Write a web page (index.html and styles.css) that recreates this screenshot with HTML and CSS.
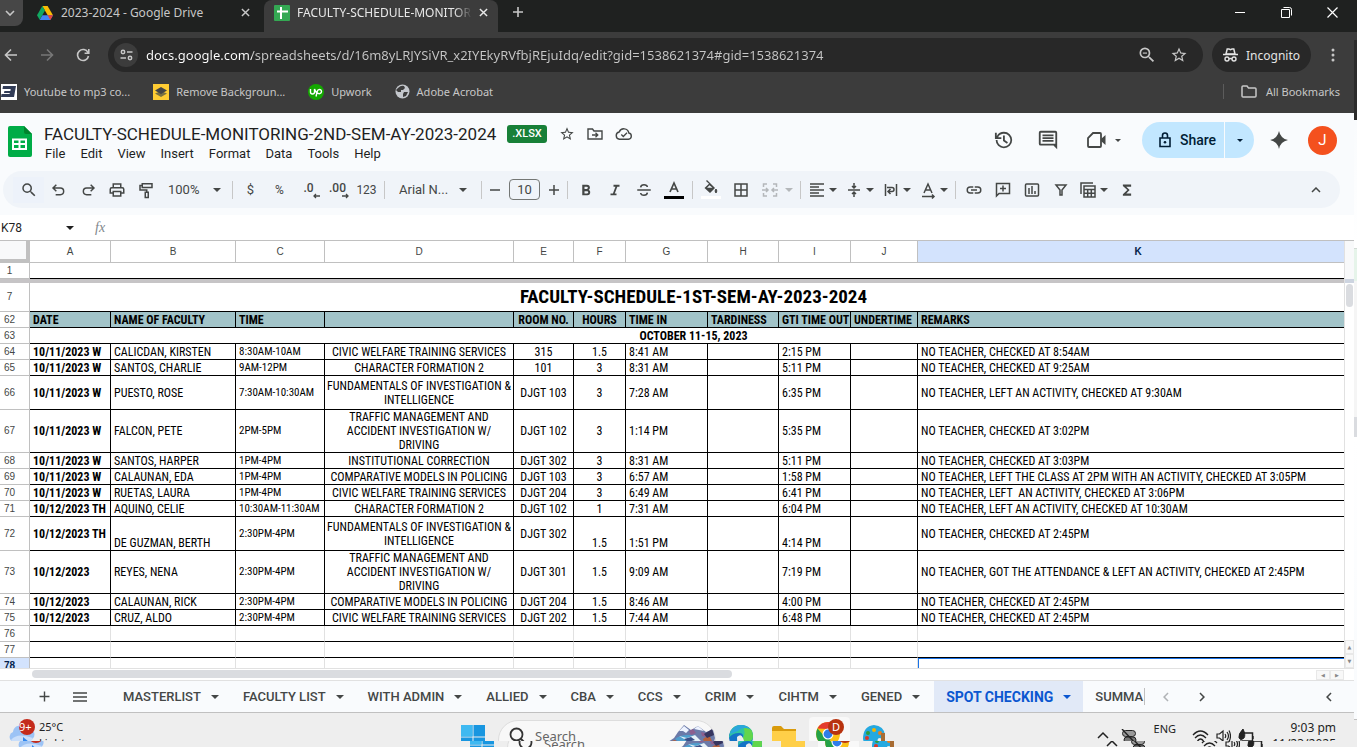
FILE: index.html
```html
<!DOCTYPE html>
<html lang="en">

<head>
    <meta charset="utf-8">
    <title>FACULTY-SCHEDULE-MONITORING-2ND-SEM-AY-2023-2024</title>
    <link rel="stylesheet" href="styles.css">
</head>

<body>
    <svg class="defs" aria-hidden="true">
        <symbol id="caret" viewBox="0 0 8 4"><path d="M0 0h8L4 4z" /></symbol>
        <symbol id="close" viewBox="0 0 10 10"><path d="M1 1l8 8M9 1l-8 8" fill="none" stroke="currentColor" stroke-width="1.6" /></symbol>
        <symbol id="star" viewBox="0 0 24 24"><path d="M22 9.24l-7.19-.62L12 2 9.19 8.63 2 9.24l5.46 4.73L5.82 21 12 17.27 18.18 21l-1.63-7.03L22 9.24zM12 15.4l-3.76 2.27 1-4.28-3.32-2.88 4.38-.38L12 6.1l1.71 4.04 4.38.38-3.32 2.88 1 4.28L12 15.4z" /></symbol>
        <symbol id="left" viewBox="0 0 24 24"><path d="M15.4 7.4L14 6l-6 6 6 6 1.4-1.4L10.8 12z" /></symbol>
        <symbol id="right" viewBox="0 0 24 24"><path d="M10 6L8.6 7.4l4.6 4.6-4.6 4.6L10 18l6-6z" /></symbol>
        <symbol id="search" viewBox="0 0 24 24"><path d="M15.5 14h-.79l-.28-.27A6.47 6.47 0 0 0 16 9.5 6.5 6.5 0 1 0 9.5 16c1.61 0 3.09-.59 4.23-1.57l.27.28v.79l5 4.99L20.49 19l-4.99-5zm-6 0C7.01 14 5 11.99 5 9.5S7.01 5 9.5 5 14 7.01 14 9.5 11.99 14 9.5 14z" /></symbol>
        <symbol id="plus" viewBox="0 0 24 24"><path d="M19 13h-6v6h-2v-6H5v-2h6V5h2v6h6z" /></symbol>
    </svg>

    <div class="tabstrip">
        <button class="tab-search" aria-label="Search tabs"><svg width="10" height="6" viewBox="0 0 10 6"><path d="M1 1l4 4 4-4" fill="none" stroke="currentColor" stroke-width="1.6" /></svg></button>
        <div class="tab">
            <svg width="16" height="14" viewBox="0 0 16 14">
                <path d="M5.3 0h5.3L16 9.3h-5.3z" fill="#fbbc04" />
                <path d="M5.3 0L8 4.6 2.7 13.8 0 9.3z" fill="#11a861" />
                <path d="M5.4 9.3H16l-2.7 4.6H2.7z" fill="#4285f4" />
                <path d="M10.7 9.3H16l-2.7 4.6z" fill="#ea4335" />
            </svg>
            <span>2023-2024 - Google Drive</span>
            <button aria-label="Close tab"><svg width="9" height="9"><use href="#close" /></svg></button>
        </div>
        <div class="tab active">
            <svg width="16" height="16" viewBox="0 0 16 16"><rect width="16" height="16" rx="1" fill="#34a853" /><path d="M3 6.5h11M7 2v12" stroke="#fff" stroke-width="2" /></svg>
            <span>FACULTY-SCHEDULE-MONITOR</span>
            <button aria-label="Close tab"><svg width="9" height="9"><use href="#close" /></svg></button>
        </div>
        <button class="new-tab" aria-label="New tab"><svg width="12" height="12" viewBox="0 0 12 12"><path d="M6 1v10M1 6h10" stroke="currentColor" stroke-width="1.6" /></svg></button>
        <div class="window-buttons">
            <button aria-label="Minimize"><svg width="10" height="10"><path d="M0 5.5h10" stroke="#fff" /></svg></button>
            <button aria-label="Restore"><svg width="11" height="11" viewBox="0 0 11 11"><path d="M.5 2.5h8v8h-8zM2.500 .5h6q2 0 2 2v6" fill="none" stroke="#fff" /></svg></button>
            <button aria-label="Close"><svg width="11" height="11" viewBox="0 0 11 11"><path d="M.5.5l10 10M10.500 .5l-10 10" stroke="#fff" stroke-width="1.2" /></svg></button>
        </div>
    </div>

    <div class="navbar">
        <button aria-label="Back"><svg width="14" height="14" viewBox="0 0 14 14"><path d="M13 7H2M7 1.500L1.500 7 7 12.500" fill="none" stroke="currentColor" stroke-width="1.6" /></svg></button>
        <button class="off" aria-label="Forward"><svg width="14" height="14" viewBox="0 0 14 14"><path d="M1 7h11M7 1.500L12.500 7 7 12.500" fill="none" stroke="currentColor" stroke-width="1.6" /></svg></button>
        <button aria-label="Reload"><svg width="14" height="14" viewBox="0 0 14 14"><path d="M12 4.500A5.500 5.500 0 1 0 12.500 8M12.800 1v4.200H8.600" fill="none" stroke="currentColor" stroke-width="1.6" /></svg></button>
        <div class="omnibox">
            <span class="site-info"><svg width="13" height="12" viewBox="0 0 13 12"><g fill="none" stroke="currentColor" stroke-width="1.5"><circle cx="3" cy="3" r="1.700" /><circle cx="10" cy="9" r="1.700" /><path d="M7 3h5.500M.5 9H6" /></g></svg></span>
            <input type="text" aria-label="Address" value="docs.google.com/spreadsheets/d/16m8yLRJYSiVR_x2IYEkyRVfbjREjuIdq/edit?gid=1538621374#gid=1538621374">
            <svg width="20" height="20" viewBox="0 0 24 24"><use href="#search" /><path d="M7 9h5v1.400H7z" /></svg>
            <svg width="18" height="18"><use href="#star" /></svg>
        </div>
        <button class="incognito">
            <svg width="15" height="14" viewBox="0 0 15 14"><path d="M3 6L4.200 1h1.800l1.500.6L9 1h1.800L12 6z" fill="none" stroke="currentColor" stroke-width="1.500" /><path d="M0 6.500h15" stroke="currentColor" stroke-width="1.500" /><g fill="none" stroke="currentColor" stroke-width="1.400"><circle cx="4" cy="11" r="2" /><circle cx="11" cy="11" r="2" /><path d="M6 11q1.500-1 3 0" /></g></svg>
            Incognito
        </button>
        <button class="more" aria-label="Menu"><svg width="4" height="14" viewBox="0 0 4 14"><circle cx="2" cy="2" r="1.500" /><circle cx="2" cy="7" r="1.500" /><circle cx="2" cy="12" r="1.500" /></svg></button>
    </div>

    <div class="bookmarks">
        <a href="#"><svg width="16" height="16" viewBox="0 0 16 16"><path d="M0 0h16v16H0z" fill="#fff" /><path d="M2 2h13l-2 11H0l.5-3h8l.3-1H3l.4-2h6l.3-2H1.500z" fill="#323c56" /></svg>Youtube to mp3 co...</a>
        <a href="#"><svg width="16" height="16" viewBox="0 0 16 16"><path d="M0 0h16v16H0z" fill="#fc3" /><path d="M8 7l6 2.500L8 13 2 9.500z" fill="#7a7042" /><path d="M8 3l6 3.500L8 10 2 6.500z" fill="#454545" /></svg>Remove Backgroun...</a>
        <a href="#"><svg width="16" height="16" viewBox="0 0 16 16"><circle cx="8" cy="8" r="8" fill="#14a800" /><path d="M2.500 5v3q0 2 2 2t2-2V5q1 3 3 4.500M8 12.500l1.200-5q.5-2 2.200-2a2 2 0 1 1 0 4.200q-1.500 0-2.800-1.500" fill="none" stroke="#fff" stroke-width="1.400" /></svg>Upwork</a>
        <a href="#"><svg width="15" height="15" viewBox="0 0 15 15"><circle cx="7.500" cy="7.500" r="7" fill="#c4c7cc" /><path d="M3 4q3-3 6-2l1 2-2 2H6v2H3L1 6zm6 4l4 0-2 4-3 1V10z" fill="#3c3c3c" /></svg>Adobe Acrobat</a>
        <a href="#" class="all"><svg width="16" height="13" viewBox="0 0 16 13"><path d="M1 11V2q0-1 1-1h4l1.500 2H14q1 0 1 1v7q0 1-1 1H2q-1 0-1-1z" fill="none" stroke="currentColor" stroke-width="1.500" /></svg>All Bookmarks</a>
    </div>

    <header class="docs-header">
        <svg class="logo" width="24" height="32" viewBox="0 0 24 32"><path d="M2 0h14l8 8v21q0 2-2 2H2q-2 0-2-2V2q0-2 2-2z" fill="#00ac47" /><path d="M16 0l8 8h-6q-2 0-2-2z" fill="#00832d" /><path d="M4 12.500h15v11.500H4zM6 14.500V17h4.500v-2.500zm6.500 0V17H17v-2.500zM6 19v3h4.500v-3zm6.500 0v3H17v-3z" fill="#fff" fill-rule="evenodd" /></svg>
        <div class="doc">
            <div class="doc-title">
                <h1>FACULTY-SCHEDULE-MONITORING-2ND-SEM-AY-2023-2024</h1>
                <span class="badge">.XLSX</span>
                <svg width="16" height="16"><use href="#star" /></svg>
                <svg width="16" height="16" viewBox="0 0 16 16"><path d="M1 13V3h4.500l1.500 2h8v8z" fill="none" stroke="currentColor" stroke-width="1.400" /><path d="M5 9h5.500M8.500 6.800L10.800 9l-2.300 2.200" fill="none" stroke="currentColor" stroke-width="1.300" /></svg>
                <svg width="18" height="16" viewBox="0 0 18 16"><path d="M4.500 13.300a3.700 3.700 0 0 1-.3-7.300 5 5 0 0 1 9.600 1 3.200 3.200 0 0 1-.3 6.300z" fill="none" stroke="currentColor" stroke-width="1.400" /><path d="M6.300 8.500l2 2L12 6.800" fill="none" stroke="currentColor" stroke-width="1.300" /></svg>
            </div>
            <nav class="menu">
                <a href="#">File</a><a href="#">Edit</a><a href="#">View</a><a href="#">Insert</a><a href="#">Format</a><a href="#">Data</a><a href="#">Tools</a><a href="#">Help</a>
            </nav>
        </div>
        <div class="doc-actions">
            <svg width="22" height="22" viewBox="0 0 24 24"><path d="M13 3a9 9 0 0 0-7.800 4.500V4h-2v7h7V9H6.700A7 7 0 1 1 6 12H4a9 9 0 1 0 9-9zm-1 4v6l4.300 3 1.100-1.600L14 12V7z" /></svg>
            <svg width="22" height="22" viewBox="0 0 24 24"><path d="M22 4a2 2 0 0 0-2-2H4a2 2 0 0 0-2 2v12q0 2 2 2h14l4 4zM20 16H4V4h16zM6 12h12v2H6zm0-3h12v2H6zm0-3h12v2H6z" /></svg>
            <span class="meet"><svg width="20" height="16" viewBox="0 0 20 16"><path d="M6 1h7q1 0 1 1v12q0 1-1 1H2q-1 0-1-1V6z" fill="none" stroke="currentColor" stroke-width="1.800" /><path d="M14 7l4.500-4v10L14 9z" /></svg><svg width="6" height="3"><use href="#caret" /></svg></span>
            <div class="share">
                <button><svg width="14" height="16" viewBox="0 0 14 16"><path d="M2 6h10v8.500H2zM4.500 6V3.500a2.500 2.500 0 0 1 5 0V6" fill="none" stroke="currentColor" stroke-width="1.600" /><circle cx="7" cy="10.200" r="1.300" /></svg>Share</button>
                <button aria-label="Share options"><svg width="6" height="3"><use href="#caret" /></svg></button>
            </div>
            <svg width="18" height="18" viewBox="0 0 18 18"><path d="M9 0q1.500 7.500 9 9-7.500 1.500-9 9-1.500-7.500-9-9 7.500-1.500 9-9z" /></svg>
            <span class="avatar">J</span>
        </div>
    </header>

    <div class="toolbar">
        <button class="find" aria-label="Search menus"><svg width="18" height="18"><use href="#search" /></svg></button>
        <button aria-label="Undo"><svg width="16" height="16" viewBox="0 0 24 24"><path d="M8 4L3 9l5 5M4 9h10q5 0 5 5t-5 5H7" fill="none" stroke="currentColor" stroke-width="2.200" /></svg></button>
        <button aria-label="Redo"><svg width="16" height="16" viewBox="0 0 24 24"><path d="M16 4l5 5-5 5M20 9H10q-5 0-5 5t5 5h7" fill="none" stroke="currentColor" stroke-width="2.200" /></svg></button>
        <button aria-label="Print"><svg width="18" height="18" viewBox="0 0 24 24"><path d="M19 8h-1V3H6v5H5a3 3 0 0 0-3 3v6h4v4h12v-4h4v-6a3 3 0 0 0-3-3zM8 5h8v3H8zm8 14H8v-4h8zm4-4h-2v-2H6v2H4v-4q0-1 1-1h14q1 0 1 1z" /></svg></button>
        <button aria-label="Paint format"><svg width="18" height="18" viewBox="0 0 24 24"><path d="M7 3.500h13v5H7zM7 6H4v6h9v3M11 15h4v7h-4z" fill="none" stroke="currentColor" stroke-width="2" /></svg></button>
        <label class="pick zoom"><select aria-label="Zoom"><option>100%</option></select><svg width="8" height="4"><use href="#caret" /></svg></label>
        <i></i>
        <button>$</button>
        <button class="small">%</button>
        <button class="stack" aria-label="Decrease decimal places"><b>.0</b><svg width="20" height="20" viewBox="0 0 20 20"><path d="M19 16h-6M15 14l-2 2 2 2" fill="none" stroke="currentColor" stroke-width="1.300" /></svg></button>
        <button class="stack" aria-label="Increase decimal places"><b>.00</b><svg width="20" height="20" viewBox="0 0 20 20"><path d="M12 16h6M16 14l2 2-2 2" fill="none" stroke="currentColor" stroke-width="1.300" /></svg></button>
        <button class="small">123</button>
        <i></i>
        <label class="pick font"><select aria-label="Font"><option>Arial N...</option></select><svg width="8" height="4"><use href="#caret" /></svg></label>
        <i></i>
        <button class="step" aria-label="Decrease font size"><svg width="12" height="12"><path d="M1 6h10" stroke="currentColor" stroke-width="1.500" /></svg></button>
        <input type="text" class="size" aria-label="Font size" value="10">
        <button class="step" aria-label="Increase font size"><svg width="12" height="12"><path d="M1 6h10M6 1v10" stroke="currentColor" stroke-width="1.500" /></svg></button>
        <i></i>
        <button aria-label="Bold"><svg width="18" height="18" viewBox="0 0 24 24"><path d="M15.600 11.800c1-.7 1.600-1.800 1.600-2.800a4 4 0 0 0-4-4H7v14h7a3.800 3.800 0 0 0 1.600-7.200zM10 7.500h3a1.500 1.500 0 0 1 0 3h-3zm3.500 9H10v-3h3.500a1.500 1.500 0 0 1 0 3z" /></svg></button>
        <button aria-label="Italic"><svg width="18" height="18" viewBox="0 0 24 24"><path d="M10 5v2.500h2.600l-3.400 9H6V19h8v-2.500h-2.300l3.400-9H18V5z" /></svg></button>
        <button aria-label="Strikethrough"><svg width="18" height="18" viewBox="0 0 24 24"><path d="M3 12h18M16.500 8q-.5-3-4.500-3T7.500 8.500M7.500 16q.5 3 4.500 3t4.500-3.500" fill="none" stroke="currentColor" stroke-width="2" /></svg></button>
        <button class="wide" aria-label="Text color"><svg width="20" height="20" viewBox="0 0 20 20"><path d="M6 12l4-9 4 9M7.500 9h5" fill="none" stroke="currentColor" stroke-width="1.700" /><path d="M0 16h20v3H0z" fill="#000" /></svg></button>
        <i></i>
        <button aria-label="Fill color"><svg width="20" height="20" viewBox="0 0 20 20"><path d="M5 1l1-1 8 8-5 5-5.500-5L8 3.800zM8.500 5.200L6 7.800h5.500z" fill-rule="evenodd" /><path d="M15 9q1.800 2 0 4-2-2 0-4z" stroke="currentColor" /><path d="M0 16h20v3H0z" fill="#fff" /></svg></button>
        <button class="wide" aria-label="Borders"><svg width="18" height="18" viewBox="0 0 18 18"><path d="M3 3h12v12H3zM9 3v12M3 9h12" fill="none" stroke="currentColor" stroke-width="1.500" /></svg></button>
        <button class="menu-btn merge" aria-label="Merge cells"><svg width="18" height="18" viewBox="0 0 18 18"><path d="M6 3H2.500v3M12 3h3.500v3M6 15H2.500v-3M12 15h3.500v-3M1 9h5.500M5 7l2 2-2 2M17 9h-5.500M13 7l-2 2 2 2" fill="none" stroke="currentColor" stroke-width="1.500" /></svg><svg width="8" height="4"><use href="#caret" /></svg></button>
        <i></i>
        <button class="menu-btn" aria-label="Horizontal align"><svg width="18" height="18" viewBox="0 0 18 18"><path d="M2 3h14M2 6h9M2 9h14M2 12h9M2 15h14" stroke="currentColor" stroke-width="1.500" /></svg><svg width="8" height="4"><use href="#caret" /></svg></button>
        <button class="menu-btn" aria-label="Vertical align"><svg width="18" height="18" viewBox="0 0 18 18"><path d="M3 9h12M9 2v4.500M7 5l2 2 2-2M9 16v-4.500M7 13l2-2 2 2" fill="none" stroke="currentColor" stroke-width="1.500" /></svg><svg width="8" height="4"><use href="#caret" /></svg></button>
        <button class="menu-btn" aria-label="Text wrapping"><svg width="18" height="18" viewBox="0 0 18 18"><path d="M3.500 3v12M14.500 3v12M5 6.500h5q2 0 2 2t-2 2H7M8.500 8l-2.500 2.500L8.500 13" fill="none" stroke="currentColor" stroke-width="1.500" /></svg><svg width="8" height="4"><use href="#caret" /></svg></button>
        <button class="menu-btn" aria-label="Text rotation"><svg width="18" height="18" viewBox="0 0 18 18"><path d="M5 12l4-9 4 9M6.500 9h5M3 15.500h12M13 13.500l2 2-2 2" fill="none" stroke="currentColor" stroke-width="1.500" /></svg><svg width="8" height="4"><use href="#caret" /></svg></button>
        <i></i>
        <button aria-label="Insert link"><svg width="18" height="18" viewBox="0 0 24 24"><path d="M3.900 12A3.100 3.100 0 0 1 7 8.900h4V7H7a5 5 0 0 0 0 10h4v-1.900H7A3.100 3.100 0 0 1 3.900 12zM8 13h8v-2H8zm9-6h-4v1.900h4a3.100 3.100 0 0 1 0 6.200h-4V17h4a5 5 0 0 0 0-10z" /></svg></button>
        <button aria-label="Insert comment"><svg width="18" height="18" viewBox="0 0 18 18"><path d="M2.500 15V2.500h13v10H5zM9 4.500v6M6 7.500h6" fill="none" stroke="currentColor" stroke-width="1.500" /></svg></button>
        <button aria-label="Insert chart"><svg width="18" height="18" viewBox="0 0 18 18"><path d="M3.500 3h11q1 0 1 1v10q0 1-1 1h-11q-1 0-1-1V4q0-1 1-1zM6 7v6M9 5v8M12 10v3" fill="none" stroke="currentColor" stroke-width="1.500" /></svg></button>
        <button aria-label="Create a filter"><svg width="18" height="18" viewBox="0 0 18 18"><path d="M4 4h10l-4 5v5H8V9z" fill="none" stroke="currentColor" stroke-width="1.500" /></svg></button>
        <button class="menu-btn" aria-label="Table views"><svg width="18" height="18" viewBox="0 0 18 18"><path d="M2 13V2h12M5 5h11v11H5zM5 8.500h11M5 12.200h11M8.700 8.500V16M12.300 8.500V16" fill="none" stroke="currentColor" stroke-width="1.500" /></svg><svg width="8" height="4"><use href="#caret" /></svg></button>
        <button aria-label="Functions"><svg width="18" height="18" viewBox="0 0 24 24"><path d="M17.500 4.500H6.500v2l6 5.500-6 5.500v2h11v-3H11l4.500-4.500L11 7.500h6.500z" /></svg></button>
        <button class="collapse" aria-label="Hide the menus"><svg width="10" height="6" viewBox="0 0 10 6"><path d="M1 5l4-4 4 4" fill="none" stroke="currentColor" stroke-width="1.500" /></svg></button>
    </div>

    <div class="formula-bar">
        <input type="text" class="cell-name" aria-label="Name box" value="K78">
        <svg width="8" height="4"><use href="#caret" /></svg>
        <label for="fx">fx</label>
        <input type="text" id="fx">
    </div>

    <main class="grid">
        <div class="cells">
            <table>
                <colgroup>
                    <col class="num"><col class="a"><col class="b"><col class="c"><col class="d"><col class="e"><col class="f"><col class="g"><col class="h"><col class="i"><col class="j"><col>
                </colgroup>
                <thead>
                    <tr><th></th><th>A</th><th>B</th><th>C</th><th>D</th><th>E</th><th>F</th><th>G</th><th>H</th><th>I</th><th>J</th><th class="current">K</th></tr>
                </thead>
                <tbody>
                    <tr><th>1</th><td colspan="11"></td></tr>
                    <tr class="freeze"><td colspan="12"></td></tr>
                    <tr class="title"><th>7</th><td colspan="11">FACULTY-SCHEDULE-1ST-SEM-AY-2023-2024</td></tr>
                    <tr class="labels"><th>62</th><td>DATE</td><td>NAME OF FACULTY</td><td>TIME</td><td></td><td>ROOM NO.</td><td>HOURS</td><td>TIME IN</td><td>TARDINESS</td><td>GTI TIME OUT</td><td>UNDERTIME</td><td>REMARKS</td></tr>
                    <tr class="week"><th>63</th><td colspan="11">OCTOBER 11-15, 2023</td></tr>
                    <tr><th>64</th><td>10/11/2023 W</td><td>CALICDAN, KIRSTEN</td><td>8:30AM-10AM</td><td>CIVIC WELFARE TRAINING SERVICES</td><td>315</td><td>1.5</td><td>8:41 AM</td><td></td><td>2:15 PM</td><td></td><td>NO TEACHER, CHECKED AT 8:54AM</td></tr>
                    <tr><th>65</th><td>10/11/2023 W</td><td>SANTOS, CHARLIE</td><td>9AM-12PM</td><td>CHARACTER FORMATION 2</td><td>101</td><td>3</td><td>8:31 AM</td><td></td><td>5:11 PM</td><td></td><td>NO TEACHER, CHECKED AT 9:25AM</td></tr>
                    <tr class="two"><th>66</th><td>10/11/2023 W</td><td>PUESTO, ROSE</td><td>7:30AM-10:30AM</td><td>FUNDAMENTALS OF INVESTIGATION &amp;<br>INTELLIGENCE</td><td>DJGT 103</td><td>3</td><td>7:28 AM</td><td></td><td>6:35 PM</td><td></td><td>NO TEACHER, LEFT AN ACTIVITY, CHECKED AT 9:30AM</td></tr>
                    <tr class="three"><th>67</th><td>10/11/2023 W</td><td>FALCON, PETE</td><td>2PM-5PM</td><td>TRAFFIC MANAGEMENT AND<br>ACCIDENT INVESTIGATION W/<br>DRIVING</td><td>DJGT 102</td><td>3</td><td>1:14 PM</td><td></td><td>5:35 PM</td><td></td><td>NO TEACHER, CHECKED AT 3:02PM</td></tr>
                    <tr><th>68</th><td>10/11/2023 W</td><td>SANTOS, HARPER</td><td>1PM-4PM</td><td>INSTITUTIONAL CORRECTION</td><td>DJGT 302</td><td>3</td><td>8:31 AM</td><td></td><td>5:11 PM</td><td></td><td>NO TEACHER, CHECKED AT 3:03PM</td></tr>
                    <tr><th>69</th><td>10/11/2023 W</td><td>CALAUNAN, EDA</td><td>1PM-4PM</td><td>COMPARATIVE MODELS IN POLICING</td><td>DJGT 103</td><td>3</td><td>6:57 AM</td><td></td><td>1:58 PM</td><td></td><td>NO TEACHER, LEFT THE CLASS AT 2PM WITH AN ACTIVITY, CHECKED AT 3:05PM</td></tr>
                    <tr><th>70</th><td>10/11/2023 W</td><td>RUETAS, LAURA</td><td>1PM-4PM</td><td>CIVIC WELFARE TRAINING SERVICES</td><td>DJGT 204</td><td>3</td><td>6:49 AM</td><td></td><td>6:41 PM</td><td></td><td>NO TEACHER, LEFT&nbsp; AN ACTIVITY, CHECKED AT 3:06PM</td></tr>
                    <tr><th>71</th><td>10/12/2023 TH</td><td>AQUINO, CELIE</td><td>10:30AM-11:30AM</td><td>CHARACTER FORMATION 2</td><td>DJGT 102</td><td>1</td><td>7:31 AM</td><td></td><td>6:04 PM</td><td></td><td>NO TEACHER, LEFT AN ACTIVITY, CHECKED AT 10:30AM</td></tr>
                    <tr class="two"><th>72</th><td>10/12/2023 TH</td><td class="low">DE GUZMAN, BERTH</td><td>2:30PM-4PM</td><td>FUNDAMENTALS OF INVESTIGATION &amp;<br>INTELLIGENCE</td><td>DJGT 302</td><td class="low">1.5</td><td class="low">1:51 PM</td><td></td><td class="low">4:14 PM</td><td></td><td>NO TEACHER, CHECKED AT 2:45PM</td></tr>
                    <tr class="three"><th>73</th><td>10/12/2023</td><td>REYES, NENA</td><td>2:30PM-4PM</td><td>TRAFFIC MANAGEMENT AND<br>ACCIDENT INVESTIGATION W/<br>DRIVING</td><td>DJGT 301</td><td>1.5</td><td>9:09 AM</td><td></td><td>7:19 PM</td><td></td><td>NO TEACHER, GOT THE ATTENDANCE &amp; LEFT AN ACTIVITY, CHECKED AT 2:45PM</td></tr>
                    <tr><th>74</th><td>10/12/2023</td><td>CALAUNAN, RICK</td><td>2:30PM-4PM</td><td>COMPARATIVE MODELS IN POLICING</td><td>DJGT 204</td><td>1.5</td><td>8:46 AM</td><td></td><td>4:00 PM</td><td></td><td>NO TEACHER, CHECKED AT 2:45PM</td></tr>
                    <tr><th>75</th><td>10/12/2023</td><td>CRUZ, ALDO</td><td>2:30PM-4PM</td><td>CIVIC WELFARE TRAINING SERVICES</td><td>DJGT 202</td><td>1.5</td><td>7:44 AM</td><td></td><td>6:48 PM</td><td></td><td>NO TEACHER, CHECKED AT 2:45PM</td></tr>
                    <tr class="blank"><th>76</th><td></td><td></td><td></td><td></td><td></td><td></td><td></td><td></td><td></td><td></td><td></td></tr>
                    <tr class="blank"><th>77</th><td></td><td></td><td></td><td></td><td></td><td></td><td></td><td></td><td></td><td></td><td></td></tr>
                    <tr class="blank"><th class="current">78</th><td></td><td></td><td></td><td></td><td></td><td></td><td></td><td></td><td></td><td></td><td class="selected"></td></tr>
                </tbody>
            </table>
        </div>
        <div class="vscroll">
            <div class="corner"></div>
            <div class="thumb"></div>
            <button aria-label="Scroll up">&#9650;</button>
            <button aria-label="Scroll down">&#9660;</button>
        </div>
    </main>

    <div class="hscroll">
        <div class="thumb"></div>
        <button aria-label="Scroll left">&#9664;</button>
        <button aria-label="Scroll right">&#9654;</button>
    </div>

    <nav class="sheets">
        <button aria-label="Add sheet"><svg width="17" height="17"><use href="#plus" /></svg></button>
        <button aria-label="All sheets"><svg width="14" height="10"><path d="M0 1h14M0 5h14M0 9h14" stroke="currentColor" stroke-width="1.500" /></svg></button>
        <div class="sheet-list">
            <a href="#">MASTERLIST<svg width="8" height="4"><use href="#caret" /></svg></a>
            <a href="#">FACULTY LIST<svg width="8" height="4"><use href="#caret" /></svg></a>
            <a href="#">WITH ADMIN<svg width="8" height="4"><use href="#caret" /></svg></a>
            <a href="#">ALLIED<svg width="8" height="4"><use href="#caret" /></svg></a>
            <a href="#">CBA<svg width="8" height="4"><use href="#caret" /></svg></a>
            <a href="#">CCS<svg width="8" height="4"><use href="#caret" /></svg></a>
            <a href="#">CRIM<svg width="8" height="4"><use href="#caret" /></svg></a>
            <a href="#">CIHTM<svg width="8" height="4"><use href="#caret" /></svg></a>
            <a href="#">GENED<svg width="8" height="4"><use href="#caret" /></svg></a>
            <a href="#" class="current">SPOT CHECKING<svg width="8" height="4"><use href="#caret" /></svg></a>
            <a href="#">SUMMA</a>
        </div>
        <button class="off" aria-label="Scroll sheets left"><svg width="18" height="18"><use href="#left" /></svg></button>
        <button aria-label="Scroll sheets right"><svg width="18" height="18"><use href="#right" /></svg></button>
        <button class="side" aria-label="Show side panel"><svg width="18" height="18"><use href="#left" /></svg></button>
    </nav>

    <footer class="taskbar">
        <div class="bar">
            <div class="weather">
                <svg width="29" height="28" viewBox="0 0 29 28">
                    <path d="M4 22a5 5 0 0 1 1-9 7 7 0 0 1 13-3 6 6 0 0 1 5 11z" fill="#9cc3f5" />
                    <path d="M3 21q6-8 22-2l-2 3H4z" fill="#c9defa" />
                    <path d="M15 18l6 5h-6z" fill="#2f86ee" />
                    <circle cx="19" cy="8" r="8" fill="#c42b1c" />
                </svg>
                <span class="count">9+</span>
                <p>25°C<br>Light rain</p>
            </div>
            <div class="apps">
                <svg width="24" height="24" viewBox="0 0 24 24"><path d="M0 0h11.500v11.500H0zM12.500 0H24v11.500H12.500zM0 12.500h11.500V24H0zM12.500 12.500H24V24H12.500z" fill="#1896e0" /><path d="M0 0h11.500v11.500H0z" fill="#3fb9f1" /></svg>
                <div class="search">
                    <svg width="18" height="18" viewBox="0 0 18 18"><circle cx="7.500" cy="7.500" r="6" fill="none" stroke="#333" stroke-width="1.800" /><path d="M12 12l5 5" stroke="#333" stroke-width="2" /></svg>
                    <input type="text" placeholder="Search" aria-label="Search">
                    <svg width="48" height="24" viewBox="0 0 48 24">
                        <path d="M1 18l6-4 4-6 6-7 7 5 7-4 8 6 7-2 2 8-2 8-18 1H10z" fill="#6b7aa8" />
                        <path d="M12 7l5-5 5 4-3 3-3-2zM27 5l4-3 6 5-5-1z" fill="#eef3ff" />
                        <path d="M22 7l4-2 3 4-5 2zM34 8l4 1 2 4-5-1z" fill="#8c5f8f" />
                        <path d="M8 15q8-6 20-3l8 8-20 1z" fill="#4f9fce" />
                        <path d="M12 12l8 2 8-3 6 6-10 2z" fill="#e6f1f8" />
                        <path d="M17 15l7-2 4 3-7 2z" fill="#3a4f87" />
                        <path d="M1 18l7-2 6 5-8-1zM36 15l6-4 4 8-8 2z" fill="#b5613d" />
                        <path d="M37 10l8-5 2 6-7 3z" fill="#36355f" />
                    </svg>
                </div>
                <svg width="24" height="24" viewBox="0 0 24 24"><circle cx="12" cy="12" r="12" fill="#1473c6" /><path d="M0 13Q1 0 12 0q12 1 12 11 0 6-7 6-4-1-3-4 1-5-4-5-7 0-10 5z" fill="#2fc3a3" /><path d="M14 1q10 2 10 10 0 6-7 6-4-1-3-4 3-5 0-12z" fill="#62d64c" /><path d="M1 9Q4 0 12 0q6 0 9 4-8-3-12 2z" fill="#2ba6dc" /><path d="M8 12q-1 8 8 9l7-2q-8 0-9-6-2-5-6-1z" fill="#eee" /></svg>
                <svg width="26" height="24" viewBox="0 0 26 24"><path d="M1 3q0-2 2-2h7l3 3h12v6H1z" fill="#d99b0c" /><path d="M1 6h24v16H1z" fill="#ffcf48" /><path d="M6 16h14v6H6z" fill="#1c7fd2" /></svg>
                <span class="running">
                    <svg width="36" height="28" viewBox="0 0 36 28">
                        <circle cx="14" cy="15" r="12" fill="#fbc116" />
                        <path d="M3.500 9.500A12 12 0 0 1 25 10H14z" fill="#e33b2e" />
                        <path d="M3.500 9.500A12 12 0 0 0 13 27l4-8-6-1z" fill="#24a148" />
                        <circle cx="14" cy="15" r="5.500" fill="#fff" /><circle cx="14" cy="15" r="4.400" fill="#2f7de9" />
                        <circle cx="22" cy="8" r="8" fill="#b8330f" />
                    </svg>
                    <span class="count">D</span>
                </span>
                <svg width="26" height="24" viewBox="0 0 26 24"><path d="M1 14Q1 1 12 0q10 1 11 10-1 4-6 3-3 2 0 5-3 6-8 5-7-2-8-9z" fill="#25a9e0" /><circle cx="6" cy="8" r="2" fill="#2f9c3c" /><circle cx="12" cy="5" r="2" fill="#f4b400" /><circle cx="18" cy="8" r="2" fill="#f07d1a" /><circle cx="5" cy="13" r="2" fill="#d9382b" /><path d="M19 8h4v8l-1 8h-2l-1-8z" fill="#a86c33" /></svg>
            </div>
            <div class="tray">
                <svg class="up" width="12" height="8" viewBox="0 0 12 8"><path d="M1 7l5-5 5 5" fill="none" stroke="currentColor" stroke-width="1.500" /></svg>
                <svg width="17" height="17" viewBox="0 0 17 17"><rect x="1.500" y="1.500" width="13" height="6" rx="3" fill="#999" stroke="#222" /><rect x="3" y="8" width="12" height="6" rx="3" fill="#777" stroke="#222" /><path d="M1 0l15 16" stroke="#222" stroke-width="1.400" /></svg>
                <span class="lang">ENG</span>
                <svg width="17" height="16" viewBox="0 0 17 16"><path d="M1 6q7.500-8 15 0M3 9q5.500-6 11 0M5.500 12q3-4 6 0" fill="none" stroke="currentColor" stroke-width="1.300" /><circle cx="8.500" cy="14" r="1.500" /></svg>
                <svg width="15" height="14" viewBox="0 0 15 14"><path d="M1 5h2.500L7 2v10L3.500 9H1zM9 5q1.500 2 0 4M11 3q3 4 0 8M13 1.500q3 5.500 0 11" fill="none" stroke="currentColor" stroke-width="1.200" /></svg>
                <svg width="17" height="16" viewBox="0 0 17 16"><path d="M6 4h8.500v8H4M15 7v3" fill="none" stroke="currentColor" stroke-width="1.500" /><path d="M5 0Q0 5 1 9q2 3 5 0 2-3-1-9zM3 9v6" stroke="currentColor" /></svg>
                <p class="clock">9:03 pm<br>11/23/2025</p>
            </div>
        </div>
    </footer>
    <div class="edge"></div>

    <script>
        // bottom strip repeats the icons, shifted right and down
        const taskbar = document.querySelector(".taskbar");
        const strip = document.createElement("div");
        strip.className = "strip";
        strip.appendChild(taskbar.querySelector(".bar").cloneNode(true));
        strip.querySelector(".weather p").remove();
        strip.querySelector(".clock").textContent = "";
        strip.querySelector(".lang").classList.add("hidden");
        taskbar.appendChild(strip);
    </script>
</body>

</html>
```
FILE: styles.css
```css
* {
    box-sizing: border-box;
}

body {
    margin: 0;
    height: 100vh;
    display: flex;
    flex-direction: column;
    overflow: hidden;
    position: relative;
    background-color: #f9fbfd;
    color: #444746;
    font-family: Roboto, "Liberation Sans", sans-serif;
    font-size: 13px;
}

button,
input,
select {
    border: 0;
    padding: 0;
    background: none;
    color: inherit;
    font: inherit;
    outline: none;
}

button {
    display: flex;
    align-items: center;
    justify-content: center;
    flex: none;
}

a {
    color: inherit;
    text-decoration: none;
}

svg {
    flex: none;
    fill: currentColor;
}

.defs {
    position: absolute;
    width: 0;
    height: 0;
}

.hidden {
    visibility: hidden;
}

/* browser */
.tabstrip,
.navbar,
.bookmarks {
    display: flex;
    align-items: center;
    flex: none;
    font-family: "Noto Sans", "Open Sans", sans-serif;
    font-size: 12px;
    color: #c7c7c7;
    background-color: #3c3c3c;
}

.tabstrip {
    height: 32px;
    background-color: #1f2120;
    align-items: stretch;
}

.tab-search {
    width: 23px;
    height: 26px;
    padding-right: 4px;
    background-color: #474747;
    border-radius: 0 0 8px 0;
}

.tab {
    display: flex;
    align-items: center;
    gap: 8px;
    width: 238px;
    padding: 0 15px 7px 10px;
    margin: 0 -1px 0 4px;
}

.tab span {
    flex: 1;
    overflow: hidden;
    white-space: nowrap;
}

.tab button {
    width: 9px;
}

.tab.active {
    width: 234px;
    margin: 0;
    padding-right: 10px;
    gap: 7px;
    background-color: #3c3c3c;
    border-radius: 8px 8px 0 0;
    color: #e8e8e8;
}

.tab.active span {
    -webkit-mask-image: linear-gradient(to right, #000 90%, transparent);
    mask-image: linear-gradient(to right, #000 90%, transparent);
}

.new-tab {
    width: 40px;
    height: 24px;
}

.window-buttons {
    display: flex;
    margin-left: auto;
    margin-right: 2px;
    height: 24px;
}

.window-buttons button {
    width: 46px;
}

.navbar {
    height: 46px;
    padding: 0 13px 0 0;
}

.navbar > button {
    width: 36px;
    padding-right: 14px;
}

.navbar > button.off {
    color: #777;
}

.omnibox {
    flex: 1;
    display: flex;
    align-items: center;
    gap: 13px;
    height: 34px;
    padding: 0 15px 0 6px;
    background-color: #282828;
    border-radius: 17px;
}

.site-info {
    display: flex;
    align-items: center;
    justify-content: center;
    width: 24px;
    height: 24px;
    border-radius: 12px;
    background-color: #3c3c3c;
    margin-right: -5px;
}

.omnibox input {
    flex: 1;
    font-size: 13px;
    /* host in white, path in grey */
    background: linear-gradient(to right, #fff 106px, #c7c7c7 106px);
    -webkit-background-clip: text;
    background-clip: text;
    color: transparent;
}

.navbar .incognito {
    gap: 8px;
    width: 99px;
    height: 34px;
    padding: 0;
    margin-left: 9px;
    background-color: #282828;
    border-radius: 17px;
    color: #e3e3e3;
}

.navbar .more {
    width: 22px;
    padding: 0;
    margin-left: 11px;
}

.bookmarks {
    height: 35px;
    padding: 0 17px 8px 1px;
    gap: 23px;
    font-size: 11px;
}

.bookmarks a {
    display: flex;
    align-items: center;
    gap: 7px;
}

.bookmarks .all {
    gap: 9px;
    margin-left: auto;
    padding-left: 17px;
    border-left: 1px solid #5c5c5c;
}

/* document header */
.docs-header {
    display: flex;
    flex: none;
    height: 58px;
    padding: 0 20px 0 8px;
}

.logo {
    margin-top: 13px;
}

.doc {
    margin-left: 12px;
}

.doc-title {
    display: flex;
    align-items: center;
    gap: 12px;
    height: 24px;
    margin-top: 9px;
}

.doc-title h1 {
    margin: 0 -1px 0 0;
    font-size: 17px;
    font-weight: 400;
    color: #1f1f1f;
}

.badge {
    padding: 0 5px;
    line-height: 18px;
    border-radius: 3px;
    background-color: #188038;
    color: #fff;
    font-size: 11px;
    font-weight: 500;
}

.menu {
    display: flex;
    gap: 15px;
    padding-left: 1px;
    line-height: 16px;
    color: #1f1f1f;
}

.doc-actions {
    display: flex;
    align-items: center;
    margin-left: auto;
    height: 54px;
    gap: 23px;
}

.meet {
    display: flex;
    align-items: center;
    gap: 8px;
    margin-left: 5px;
    margin-right: -2px;
}

.share {
    display: flex;
    height: 36px;
    gap: 1px;
    color: #001d35;
    font-size: 14px;
    font-weight: 500;
}

.share button {
    width: 82px;
    gap: 8px;
    padding-left: 8px;
    background-color: #c2e7ff;
    border-radius: 18px 0 0 18px;
}

.share button + button {
    width: 29px;
    padding: 0;
    border-radius: 0 18px 18px 0;
}

.doc-actions > svg:nth-of-type(3) {
    margin-left: -7px;
    margin-right: -3px;
}

.avatar {
    width: 29px;
    line-height: 29px;
    border-radius: 15px;
    background-color: #f4511e;
    color: #fff;
    text-align: center;
    font-size: 15px;
}

.toolbar {
    display: flex;
    align-items: center;
    flex: none;
    height: 37px;
    margin: 0 17px 7px 3px;
    padding: 0 10px;
    border-radius: 19px;
    background-color: #f0f4f9;
}

.toolbar button {
    width: 29px;
    height: 26px;
}

.toolbar i {
    width: 1px;
    height: 18px;
    margin: 0 3px;
    background-color: #c7c7c7;
}

.toolbar .find {
    width: 31px;
    background-color: #edf2fa;
}

.toolbar .wide {
    width: 31px;
}

.toolbar .small {
    font-size: 12px;
}

.toolbar .step {
    width: 20px;
}

.toolbar .menu-btn {
    width: 37px;
    gap: 3px;
}

.toolbar .merge {
    width: 41px;
    gap: 6px;
    color: #b4b7ba;
}

.toolbar .stack {
    position: relative;
}

.stack b {
    margin-bottom: 4px;
    font-size: 12px;
    font-weight: 500;
}

.stack svg {
    position: absolute;
    right: 2px;
    top: 3px;
}

.pick {
    display: flex;
    align-items: center;
    width: 69px;
    padding: 0 8px;
}

.pick select {
    flex: 1;
    min-width: 0;
    appearance: none;
}

.pick.font {
    width: 90px;
    padding: 0 11px;
}

.size {
    width: 31px;
    height: 21px;
    margin: 0 4px;
    border: 1px solid #747775;
    border-radius: 4px;
    text-align: center;
}

.toolbar .collapse {
    margin-left: auto;
}

.formula-bar {
    display: flex;
    align-items: center;
    flex: none;
    height: 25px;
    padding-left: 1px;
    background-color: #fff;
    font-size: 12px;
    color: #1f1f1f;
}

.cell-name {
    width: 65px;
}

.formula-bar label {
    margin: 0 10px 0 21px;
    font: italic 14px "Liberation Serif", serif;
    color: #80868b;
}

.formula-bar #fx {
    flex: 1;
}

/* cells */
.grid {
    display: flex;
    flex: 1;
    min-height: 0;
    margin-right: 3px;
    border-top: 1px solid #c0c0c0;
    border-bottom: 1px solid #e1e1e1;
    background-color: #fff;
}

.cells {
    flex: 1;
    overflow: hidden;
}

table {
    width: 100%;
    table-layout: fixed;
    border-spacing: 0;
    font-family: "Roboto Condensed", "Arial Narrow", Roboto, sans-serif;
    font-size: 12px;
    line-height: 14px;
    color: #000;
}

.num { width: 30px; }
.a { width: 81px; }
.b { width: 125px; }
.c { width: 89px; }
.d { width: 189px; }
.e { width: 60px; }
.f { width: 52px; }
.g { width: 82px; }
.h { width: 71px; }
.i { width: 72px; }
.j { width: 67px; }

th {
    height: 16px;
    padding: 0 10px 0 0;
    border-right: 1px solid #c0c0c0;
    border-bottom: 1px solid #c0c0c0;
    font-family: "Liberation Sans", sans-serif;
    font-size: 10px;
    font-weight: 400;
    color: #444746;
}

thead th {
    height: 22px;
    padding: 0;
}

thead th:first-child {
    background-color: #f8f9fa;
    border-right: 4px solid #c0c0c0;
    border-bottom: 4px solid #c0c0c0;
}

thead th:last-child {
    border-right: 0;
    padding-left: 14px;
}

th.current {
    background-color: #d3e3fd;
    color: #041e49;
    font-weight: 700;
}

td {
    padding: 0 0 0 3px;
    border-right: 1px solid #000;
    border-bottom: 1px solid #000;
    white-space: nowrap;
}

td:last-child {
    border-right: 0;
}

td:nth-child(2) {
    font-weight: 700;
    vertical-align: middle;
}

td:nth-child(4) {
    font-size: 11px;
}

td:nth-child(5),
td:nth-child(6),
td:nth-child(7) {
    padding: 0;
    text-align: center;
}

.freeze td {
    height: 4px;
    padding: 0;
    border: 0;
    background-color: #c6c4c6;
}

.title td:nth-child(2) {
    height: 29px;
    padding: 0 0 0 13px;
    font-size: 19px;
    line-height: 28px;
    text-align: center;
}

.week td:nth-child(2) {
    padding-left: 13px;
    text-align: center;
    vertical-align: bottom;
}

.labels td {
    background-color: #a2c4c9;
    font-size: 12px;
    font-weight: 700;
}

.two td {
    height: 34px;
}

.three td {
    height: 43px;
}

td.low {
    vertical-align: bottom;
}

.blank td {
    border-right-color: #e1e1e1;
}

td.selected {
    border-top: 1px solid #1a73e8;
    border-left: 1px solid #1a73e8;
}

.vscroll {
    display: flex;
    flex-direction: column;
    width: 10px;
    border-left: 1px solid #e1e1e1;
}

.vscroll .corner {
    height: 42px;
    background-color: #f8f9fa;
    border-bottom: 4px solid #cdd4e0;
}

.vscroll .thumb {
    height: 23px;
    margin: 1px 1px auto;
    border-radius: 4px;
    background-color: #dadce0;
}

.vscroll button,
.hscroll button {
    height: 14px;
    border: 1px solid #e8e8e8;
    background-color: #f8f8f8;
    font: 5px "DejaVu Sans", sans-serif;
    color: #888;
}

.hscroll {
    display: flex;
    flex: none;
    height: 11px;
    padding: 1px 13px 0 32px;
    background-color: #fff;
}

.hscroll .thumb {
    width: 700px;
    height: 8px;
    margin-right: auto;
    border-radius: 4px;
    background-color: #dadce0;
}

.hscroll button {
    width: 14px;
    height: 10px;
}

.sheets {
    display: flex;
    align-items: stretch;
    flex: none;
    height: 33px;
    margin-right: 3px;
    padding-left: 26px;
    border-top: 1px solid #e1e1e1;
    border-bottom: 1px solid #c0c0c0;
    background-color: #f9fbfd;
}

.sheets button {
    width: 36px;
}

.sheets .off {
    margin-left: 3px;
    color: #b0b3b6;
}

.sheets .side {
    margin-left: auto;
    margin-right: 7px;
}

.sheet-list {
    display: flex;
    margin-left: 13px;
    font-weight: 500;
}

.sheet-list a {
    display: flex;
    align-items: center;
    gap: 10px;
    padding: 0 12px;
}

.sheet-list a:last-child {
    padding-right: 1px;
    margin: 7px 0;
    border-right: 1px solid #c0c0c0;
}

.sheet-list .current {
    margin-left: 2px;
    background-color: #e1e9f7;
    color: #0b57d0;
    font-size: 14px;
    font-weight: 700;
}

/* desktop bar */
.taskbar {
    position: relative;
    flex: none;
    height: 34px;
    overflow: hidden;
    background-color: #eee;
    font-family: "Noto Sans", "Open Sans", sans-serif;
    font-size: 12px;
    line-height: 16px;
    color: #222;
}

.bar {
    display: flex;
    align-items: flex-start;
    height: 48px;
}

.bar p {
    margin: 0;
    font-size: 11px;
}

.weather {
    position: relative;
    display: flex;
    gap: 2px;
    width: 461px;
    padding: 6px 0 0 8px;
}

.weather .count {
    position: absolute;
    left: 19px;
    top: 6px;
    font-size: 11px;
    color: #fff;
}

.apps {
    display: flex;
    align-items: flex-start;
    gap: 18px;
    padding-top: 12px;
}

.search {
    display: flex;
    align-items: center;
    width: 218px;
    height: 40px;
    margin: -5px -5px 0 -5px;
    padding: 0 0 8px 10px;
    border: 1px solid #ddd;
    border-radius: 20px;
    background-color: #f8f8f8;
}

.search input {
    flex: 1;
    min-width: 0;
    margin-left: 8px;
    font-size: 13px;
}

.search input::placeholder {
    color: #666;
    opacity: 1;
}

.running {
    position: relative;
    margin: -8px -6px 0;
    height: 40px;
    padding: 2px 0 0 5px;
    border-radius: 4px;
    background-color: #f8f8f8;
}

.running .count {
    position: absolute;
    left: 23px;
    top: 2px;
    font-size: 11px;
    color: #fff;
}

.tray {
    display: flex;
    margin-left: auto;
    gap: 7px;
    padding: 16px 21px 0 0;
}

.tray .up {
    margin: 2px 5px 0 0;
}

.tray .lang {
    margin: -8px 9px 0;
    font-size: 11px;
}

.bar .clock {
    margin-top: -9px;
    width: 74px;
    text-align: right;
    font-size: 12px;
}

.strip {
    position: absolute;
    left: 0;
    right: -9px;
    top: 28px;
    bottom: 0;
    padding-left: 9px;
    overflow: hidden;
    background-color: #eee;
}

.strip .bar {
    margin-top: -20px;
}

/* right window border */
.edge {
    position: absolute;
    top: 40px;
    right: 0;
    width: 3px;
    height: 680px;
    background: linear-gradient(#2b2b2b 80px, #f9fbfd 80px, #fff 208px, #c0c0c0 208px, #e6f4ea 209px, #e6f4ea 241px, #f5f5f5 241px, #f5f5f5 377px, #dadce0 377px, #dadce0 397px, #fff 397px, #f9fbfd 646px, #f9fbfd 679px, #c0c0c0 679px);
}
```
